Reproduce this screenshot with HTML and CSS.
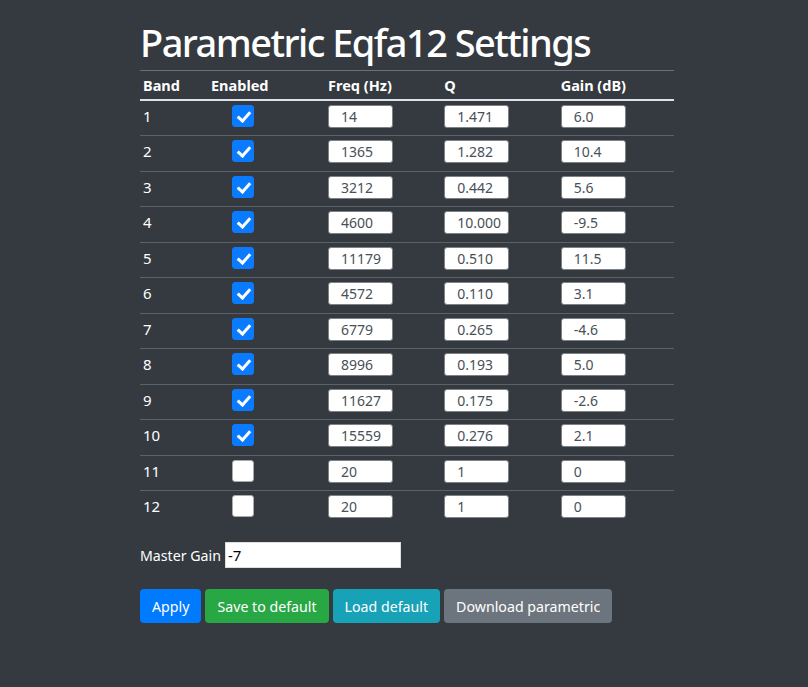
FILE: index.html
```html
<!DOCTYPE html>
<html>
<head>
<meta charset="utf-8">
<link rel="stylesheet" href="styles.css">
</head>
<body>
<main class="page">
  <h1 class="title">Parametric Eqfa12 Settings</h1>
  <table class="eq">
    <colgroup>
      <col class="c-band"><col class="c-en"><col class="c-val"><col class="c-val"><col class="c-val">
    </colgroup>
    <thead>
      <tr><th>Band</th><th>Enabled</th><th>Freq (Hz)</th><th>Q</th><th>Gain (dB)</th></tr>
    </thead>
    <tbody>
      <tr><td>1</td><td><span class="chk on"></span></td><td><input class="num" value="14"></td><td><input class="num" value="1.471"></td><td><input class="num" value="6.0"></td></tr>
      <tr><td>2</td><td><span class="chk on"></span></td><td><input class="num" value="1365"></td><td><input class="num" value="1.282"></td><td><input class="num" value="10.4"></td></tr>
      <tr><td>3</td><td><span class="chk on"></span></td><td><input class="num" value="3212"></td><td><input class="num" value="0.442"></td><td><input class="num" value="5.6"></td></tr>
      <tr><td>4</td><td><span class="chk on"></span></td><td><input class="num" value="4600"></td><td><input class="num" value="10.000"></td><td><input class="num" value="-9.5"></td></tr>
      <tr><td>5</td><td><span class="chk on"></span></td><td><input class="num" value="11179"></td><td><input class="num" value="0.510"></td><td><input class="num" value="11.5"></td></tr>
      <tr><td>6</td><td><span class="chk on"></span></td><td><input class="num" value="4572"></td><td><input class="num" value="0.110"></td><td><input class="num" value="3.1"></td></tr>
      <tr><td>7</td><td><span class="chk on"></span></td><td><input class="num" value="6779"></td><td><input class="num" value="0.265"></td><td><input class="num" value="-4.6"></td></tr>
      <tr><td>8</td><td><span class="chk on"></span></td><td><input class="num" value="8996"></td><td><input class="num" value="0.193"></td><td><input class="num" value="5.0"></td></tr>
      <tr><td>9</td><td><span class="chk on"></span></td><td><input class="num" value="11627"></td><td><input class="num" value="0.175"></td><td><input class="num" value="-2.6"></td></tr>
      <tr><td>10</td><td><span class="chk on"></span></td><td><input class="num" value="15559"></td><td><input class="num" value="0.276"></td><td><input class="num" value="2.1"></td></tr>
      <tr><td>11</td><td><span class="chk"></span></td><td><input class="num" value="20"></td><td><input class="num" value="1"></td><td><input class="num" value="0"></td></tr>
      <tr><td>12</td><td><span class="chk"></span></td><td><input class="num" value="20"></td><td><input class="num" value="1"></td><td><input class="num" value="0"></td></tr>
    </tbody>
  </table>
  <div class="master">
    <label class="master-label">Master Gain</label>
    <input class="master-input" value="-7">
  </div>
  <div class="buttons">
    <button class="btn blue">Apply</button>
    <button class="btn green">Save to default</button>
    <button class="btn teal">Load default</button>
    <button class="btn gray">Download parametric</button>
  </div>
</main>
</body>
</html>
```
FILE: styles.css
```css
html, body {
  margin: 0;
  background: #343a40;
}
body {
  font-family: "Noto Sans", "Open Sans", sans-serif;
  color: #fff;
  font-size: 15px;
}
.page {
  padding: 20px 0 0 140px;
  width: 534px;
}
.title {
  margin: 0 0 6px 0;
  font-size: 38px;
  font-weight: 500;
  line-height: 44px;
  letter-spacing: -1.55px;
}
.eq {
  width: 534px;
  border-collapse: collapse;
  table-layout: fixed;
}
.c-band { width: 68px; }
.c-en { width: 117px; }
.c-val { width: 116.3px; }
.eq th {
  text-align: left;
  font-weight: 700;
  font-size: 14.5px;
  height: 28px;
  padding: 0 3px;
  border-top: 1px solid #6c7075;
  border-bottom: 2px solid #dee2e6;
  vertical-align: middle;
}
.eq td {
  height: 35.5px;
  box-sizing: border-box;
  padding: 4px 3px 0 3px;
  vertical-align: top;
  line-height: 23px;
  border-top: 1px solid #5c6166;
}
.eq tbody tr:first-child td { border-top: none; }
.chk {
  display: block;
  width: 22px;
  height: 22px;
  margin-left: 21px;
  box-sizing: border-box;
  border-radius: 3px;
  background: #fff;
  border: 1px solid #aaa;
}
.chk.on {
  background: #0a7bff;
  border-color: #0a7bff;
  position: relative;
}
.chk.on::after {
  content: "";
  position: absolute;
  left: 7px;
  top: 3px;
  width: 5px;
  height: 10px;
  border: solid #fff;
  border-width: 0 3.5px 3.5px 0;
  transform: rotate(42deg);
}
.num {
  display: block;
  width: 65px;
  height: 23px;
  box-sizing: border-box;
  border: 1px solid #7d8287;
  border-radius: 3px;
  background: #fff;
  color: #495057;
  font-family: inherit;
  font-size: 14px;
  padding: 0 0 0 12px;
  margin: 0;
}
.master {
  display: flex;
  align-items: center;
  gap: 4px;
  margin-top: 16px;
}
.master-label {
  font-size: 14.2px;
}
.master-input {
  width: 176px;
  height: 26px;
  box-sizing: border-box;
  border: 1px solid #ddd;
  background: #fff;
  color: #000;
  font-family: inherit;
  font-size: 15px;
  padding: 0 2px;
  margin: 0;
}
.buttons {
  display: flex;
  gap: 4px;
  margin-top: 21px;
}
.btn {
  height: 34px;
  padding: 0 12px;
  border: none;
  border-radius: 4px;
  color: #fff;
  font-family: inherit;
  font-size: 14.2px;
  cursor: pointer;
}
.blue { background: #007bff; }
.green { background: #28a745; }
.teal { background: #17a2b8; }
.gray { background: #6c757d; }
```
